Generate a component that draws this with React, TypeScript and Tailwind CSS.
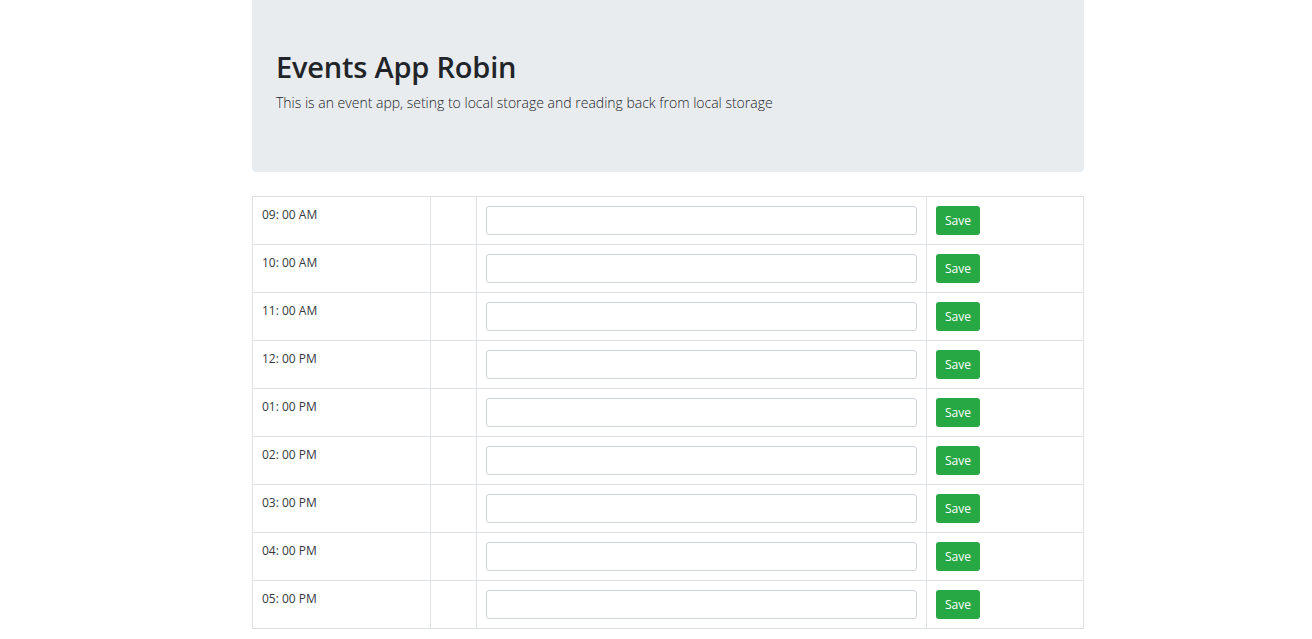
import React from "react"

const hours = [
  "09: 00 AM",
  "10: 00 AM",
  "11: 00 AM",
  "12: 00 PM",
  "01: 00 PM",
  "02: 00 PM",
  "03: 00 PM",
  "04: 00 PM",
  "05: 00 PM",
]

export default function App() {
  return (
    <div
      className="min-h-screen bg-white text-[#212529]"
      style={{ fontFamily: '"Segoe UI", "Open Sans", "Noto Sans", sans-serif' }}
    >
      <div className="flex justify-center pl-6">
        <div className="w-[832px]">
          {/* Jumbotron */}
          <div className="bg-[#e9ecef] rounded-b-[4px] px-6 pt-[49px] pb-[46px] mb-6">
            <h1 className="text-[29px] leading-[36px] font-semibold mb-[6px] tracking-[-0.2px]">
              Events App Robin
            </h1>
            <p className="text-[14px] leading-[23px] font-light mb-3">
              This is an event app, seting to local storage and reading back from local storage
            </p>
          </div>

          {/* Hours */}
          <table className="w-full border-collapse text-[12px] leading-[18px]">
            <tbody>
              {hours.map((h) => (
                <tr key={h} className="h-12">
                  <td className="w-[178px] border border-[#dee2e6] p-[9px] align-top text-[#343a40]">
                    {h}
                  </td>
                  <td className="w-[46px] border border-[#dee2e6] p-[9px]"></td>
                  <td className="w-[450px] border border-[#dee2e6] p-[9px] align-top">
                    <input
                      type="text"
                      className="block w-full h-[29px] border border-[#ced4da] rounded-[3px] px-2 text-[12px] outline-none"
                    />
                  </td>
                  <td className="border border-[#dee2e6] p-[9px] align-top">
                    <button className="h-[29px] px-[9px] bg-[#28a745] text-white text-[12px] rounded-[3px]">
                      Save
                    </button>
                  </td>
                </tr>
              ))}
            </tbody>
          </table>
        </div>
      </div>
    </div>
  )
}
